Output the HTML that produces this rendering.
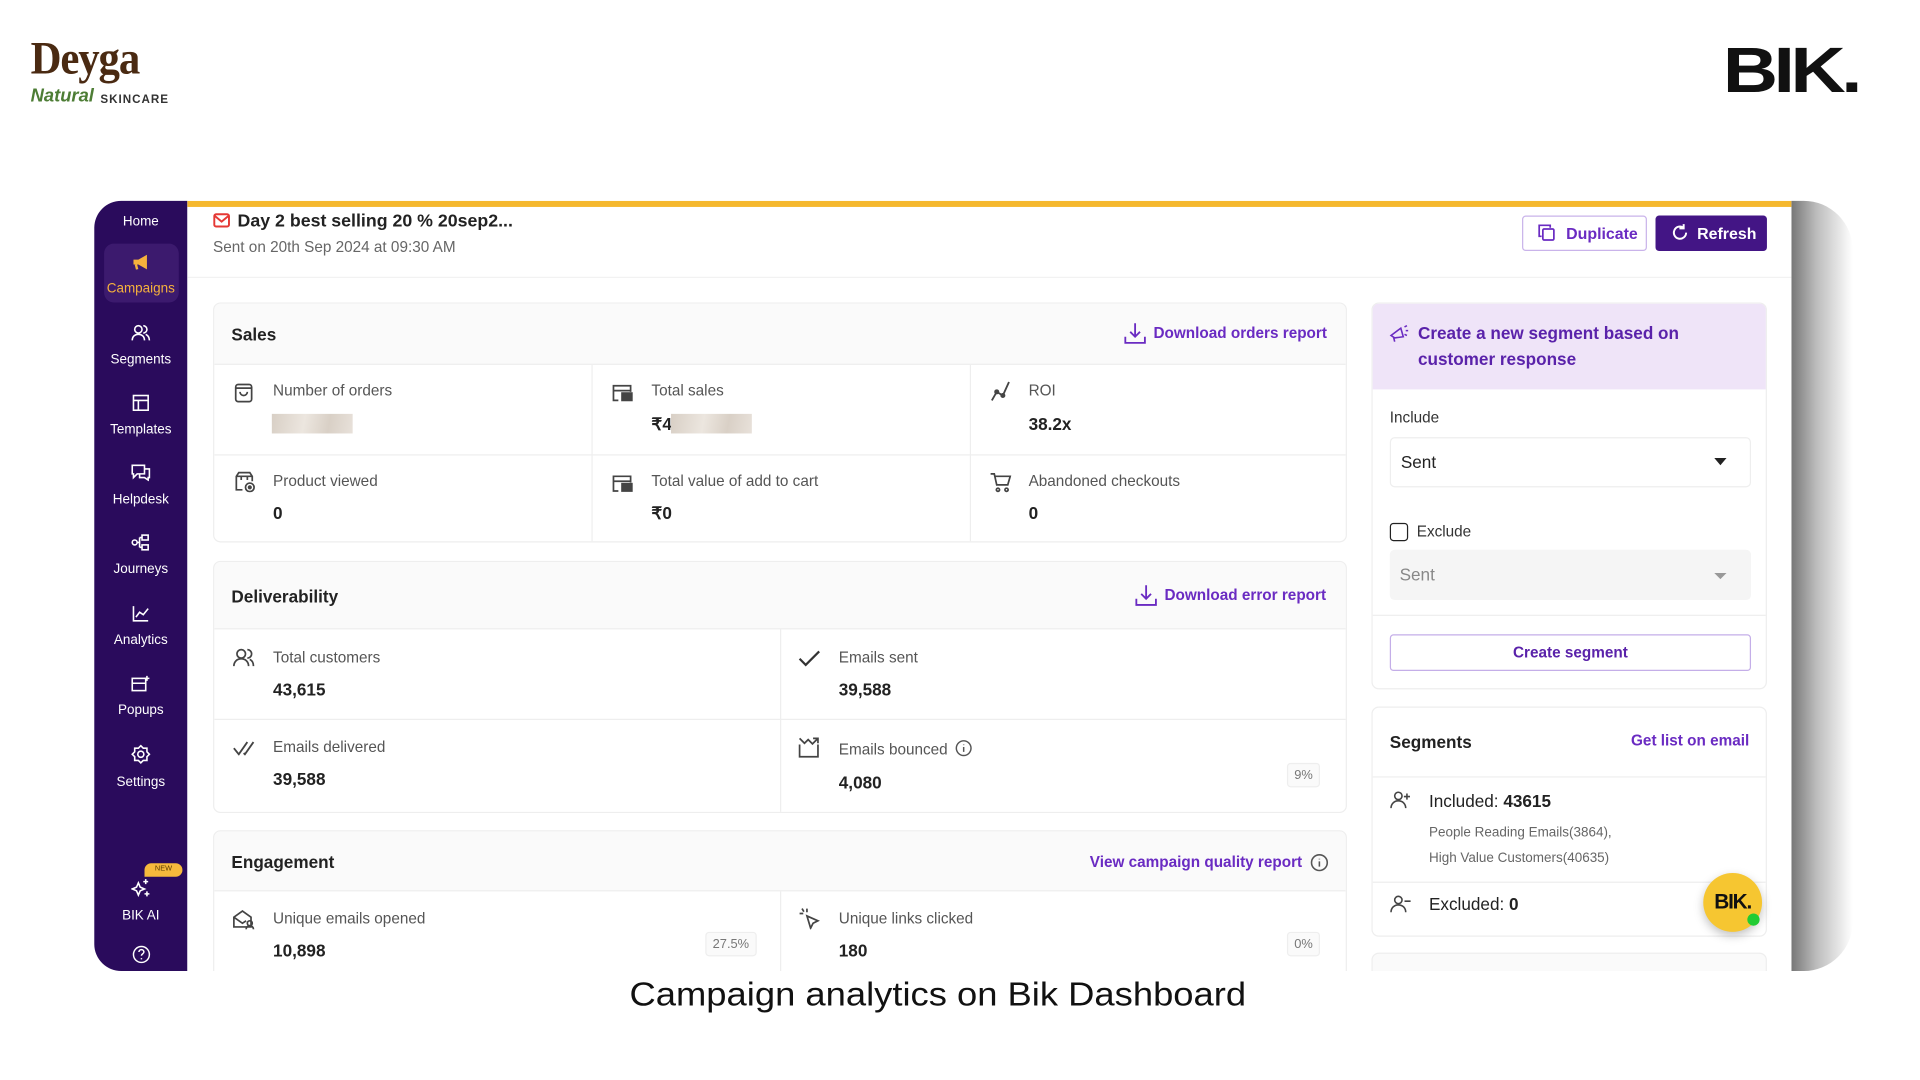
<!DOCTYPE html>
<html><head><meta charset="utf-8">
<style>
*{margin:0;padding:0;box-sizing:border-box}
html,body{width:1920px;height:1080px;overflow:hidden;background:#fff;font-family:"Liberation Sans",sans-serif}
#w{position:absolute;left:0;top:0;width:1568px;height:882px;transform:scale(1.22449);transform-origin:0 0}
.a{position:absolute}
.side{left:77px;top:164px;width:76px;height:629px;background:#2a0b5c;border-radius:22px 0 0 22px}
.si{position:absolute;left:0;width:76px;text-align:center;color:#fff;font-size:11px}
.si svg{display:block;margin:0 auto 9px}
.main{left:153px;top:164px;width:1310px;height:629px;background:#fff;overflow:hidden}
.card{position:absolute;border:1px solid #eee;border-radius:6px;background:#fff;overflow:hidden}
.ch{position:absolute;left:0;right:0;top:0;background:#fafafa;border-bottom:1px solid #eee}
.ct{position:absolute;left:14px;font-weight:bold;font-size:14px;color:#222}
.lk{position:absolute;color:#6a2bc2;font-weight:bold;font-size:12.5px}
.lbl{position:absolute;font-size:12.5px;color:#555}
.val{position:absolute;font-size:14px;font-weight:bold;color:#222}
.vl{position:absolute;width:1px;background:#eee}
.hl{position:absolute;height:1px;background:#eee}
.ic{position:absolute}
.pill{position:absolute;font-size:10.5px;color:#777;border:1px solid #eee;background:#fafafa;border-radius:3px;padding:3px 5px}
</style></head><body><div id="w">

<!-- logos -->
<div class="a" style="left:25px;top:26px;font-family:'Liberation Serif',serif;font-weight:bold;font-size:38px;color:#4a2a12;letter-spacing:-1px;transform:scaleX(0.92);transform-origin:0 0">Deyga</div>
<div class="a" style="left:25px;top:70px;font-size:15px;color:#4d7d35;font-style:italic;font-weight:bold">Natural</div>
<div class="a" style="left:82px;top:76px;font-size:9.5px;color:#333;font-weight:bold;letter-spacing:0.8px">SKINCARE</div>
<div class="a" style="left:1407px;top:28px;font-size:52px;font-weight:900;color:#111;letter-spacing:-3px;transform:scaleX(1.2);transform-origin:0 0"><b>BIK.</b></div>

<!-- shadow -->
<div class="a" style="left:1463px;top:164px;width:50px;height:629px;background:linear-gradient(90deg,#777,#bbb 40%,#fff);border-radius:0 40px 40px 0"></div>

<!-- sidebar -->
<div class="a side">
 <div class="si" style="top:11px">Home</div>
 <div class="a" style="left:8px;top:35px;width:61px;height:48px;background:#3c1a6e;border-radius:8px"></div>
 <div class="si" style="top:43px;color:#f6b13c"><svg width="16" height="14" viewBox="0 0 16 14"><path d="M2 5h4l7-4v12l-7-4H2z" fill="#f6b13c"/><path d="M4 9l1 4" stroke="#f6b13c" stroke-width="2"/></svg>Campaigns</div>
 <div class="si" style="top:101px"><svg width="16" height="14" viewBox="0 0 16 14" fill="none" stroke="#fff" stroke-width="1.3"><circle cx="6" cy="4" r="3"/><path d="M1 13c0-3 2-5 5-5s5 2 5 5"/><path d="M10 1a3 3 0 010 6M12 8c2 1 3 3 3 5"/></svg>Segments</div>
 <div class="si" style="top:158px"><svg width="14" height="14" viewBox="0 0 14 14" fill="none" stroke="#fff" stroke-width="1.3"><rect x="1" y="1" width="12" height="12"/><path d="M1 5h12M5 5v8"/></svg>Templates</div>
 <div class="si" style="top:215px"><svg width="16" height="14" viewBox="0 0 16 14" fill="none" stroke="#fff" stroke-width="1.3"><path d="M1 1h10v7H5l-3 3V8H1z"/><path d="M11 4h4v7h-1v2l-3-2H7V8"/></svg>Helpdesk</div>
 <div class="si" style="top:272px"><svg width="16" height="14" viewBox="0 0 16 14" fill="none" stroke="#fff" stroke-width="1.3"><circle cx="3" cy="7" r="2"/><rect x="9" y="1" width="5" height="4"/><rect x="9" y="9" width="5" height="4"/><path d="M5 7h2M7 3v8M7 3h2M7 11h2"/></svg>Journeys</div>
 <div class="si" style="top:330px"><svg width="14" height="14" viewBox="0 0 14 14" fill="none" stroke="#fff" stroke-width="1.3"><path d="M1 1v12h12M3 10l3-4 3 2 4-5"/></svg>Analytics</div>
 <div class="si" style="top:387px"><svg width="16" height="14" viewBox="0 0 16 14" fill="none" stroke="#fff" stroke-width="1.3"><rect x="1" y="3" width="11" height="10"/><path d="M1 7h11M13 1v4M11 3h4"/></svg>Popups</div>
 <div class="si" style="top:444px"><svg width="16" height="16" viewBox="0 0 16 16" fill="none" stroke="#fff" stroke-width="1.3"><circle cx="8" cy="8" r="2.5"/><path d="M8 1l2 2h3v3l2 2-2 2v3h-3l-2 2-2-2H3v-3L1 8l2-2V3h3z"/></svg>Settings</div>
 <div class="a" style="left:41px;top:541px;width:31px;height:11px;background:#f6b93c;border-radius:6px 6px 6px 0;font-size:6px;color:#5a3a00;text-align:center;line-height:11px">NEW</div>
 <div class="si" style="top:553px"><svg width="16" height="16" viewBox="0 0 16 16" fill="none" stroke="#fff" stroke-width="1.3"><path d="M6 4l1.5 3.5L11 9l-3.5 1.5L6 14l-1.5-3.5L1 9l3.5-1.5z"/><path d="M12 1v4M10 3h4M13 11v4M11 13h4"/></svg>BIK AI</div>
 <div class="si" style="top:608px"><svg width="15" height="15" viewBox="0 0 15 15" fill="none" stroke="#fff" stroke-width="1.2"><circle cx="7.5" cy="7.5" r="6.5"/><path d="M5.5 5.5a2 2 0 114 0c0 1.5-2 1.5-2 3M7.5 10.5v1"/></svg></div>
</div>

<!-- main -->
<div class="a main">
 <div class="a" style="left:0;top:0;width:1310px;height:5px;background:#f5b82e"></div>
 <svg class="ic" style="left:21px;top:10px" width="14" height="12" viewBox="0 0 14 12" fill="none" stroke="#e53935" stroke-width="1.6"><rect x="1" y="1" width="12" height="10" rx="1.5"/><path d="M1 2l6 5 6-5"/></svg>
 <div class="a" style="left:41px;top:9px;font-size:14.5px;font-weight:bold;color:#222">Day 2 best selling 20 % 20sep2...</div>
 <div class="a" style="left:21px;top:31px;font-size:12.5px;color:#666">Sent on 20th Sep 2024 at 09:30 AM</div>
 <div class="hl" style="left:0;top:62px;width:1310px;background:#f2f2f2"></div>
 <div class="a" style="left:1090px;top:12px;width:102px;height:29px;border:1px solid #c9b3ea;border-radius:3px;color:#6a2bc2;font-size:13px;font-weight:bold;line-height:27px;padding-left:35px">Duplicate</div>
 <svg class="ic" style="left:1102px;top:18px" width="16" height="16" viewBox="0 0 16 16" fill="none" stroke="#6a2bc2" stroke-width="1.4"><path d="M4 11H2V2h9v2"/><rect x="5" y="5" width="9" height="9" rx="1"/></svg>
 <div class="a" style="left:1199px;top:12px;width:91px;height:29px;background:#431585;border-radius:3px;color:#fff;font-size:13px;font-weight:bold;line-height:29px;padding-left:34px">Refresh</div>
 <svg class="ic" style="left:1211px;top:18px" width="16" height="16" viewBox="0 0 16 16" fill="none" stroke="#fff" stroke-width="1.6"><path d="M13 8a5 5 0 11-2-4"/><path d="M11 1v3.5h-3.5" /></svg>

 <!-- Sales -->
 <div class="card" style="left:21px;top:83px;width:926px;height:196px">
  <div class="ch" style="height:50px"></div>
  <div class="ct" style="top:17px">Sales</div>
  <svg class="ic" style="left:743px;top:15px" width="18" height="18" viewBox="0 0 18 18" fill="none" stroke="#6a2bc2" stroke-width="1.5"><path d="M9 1v11M5 8l4 4 4-4M1 12v5h16v-5"/></svg>
  <div class="lk" style="left:767px;top:17px">Download orders report</div>
  <div class="vl" style="left:308px;top:50px;height:146px"></div>
  <div class="vl" style="left:617px;top:50px;height:146px"></div>
  <div class="hl" style="left:0;top:123px;width:926px"></div>
  <svg class="ic" style="left:16px;top:64px" width="16" height="17" viewBox="0 0 16 17" fill="none" stroke="#444" stroke-width="1.4"><rect x="1.5" y="2" width="13" height="14" rx="2"/><path d="M1.5 5h13M5 8a3 3 0 006 0"/></svg>
  <div class="lbl" style="left:48px;top:64px">Number of orders</div>
  <div class="a" style="left:47px;top:90px;width:66px;height:16px;background:linear-gradient(100deg,#d8cfc5,#ece6df 40%,#d9d0c6 70%,#e8e1da)"></div>
  <svg class="ic" style="left:324px;top:65px" width="18" height="15" viewBox="0 0 18 15" fill="none" stroke="#444" stroke-width="1.4"><path d="M6 14H2V2h14v5"/><path d="M2 6h14"/><rect x="9" y="8" width="8" height="6" fill="#444"/></svg>
  <div class="lbl" style="left:357px;top:64px">Total sales</div>
  <div class="val" style="left:357px;top:90px">₹4</div>
  <div class="a" style="left:373px;top:90px;width:66px;height:16px;background:linear-gradient(100deg,#d8cfc5,#ece6df 40%,#d9d0c6 70%,#e8e1da)"></div>
  <svg class="ic" style="left:633px;top:62px" width="18" height="18" viewBox="0 0 18 18" fill="none" stroke="#444" stroke-width="1.5"><path d="M2 17l4-7 5 3 5-11"/><circle cx="6" cy="10" r="1.3" fill="#444"/><circle cx="11" cy="13" r="1.3" fill="#444"/></svg>
  <div class="lbl" style="left:665px;top:64px">ROI</div>
  <div class="val" style="left:665px;top:90px">38.2x</div>
  <svg class="ic" style="left:16px;top:136px" width="18" height="18" viewBox="0 0 18 18" fill="none" stroke="#444" stroke-width="1.4"><path d="M7 16H2V5l2-3h9l2 3v4M2 5h13M6 5v3M11 5v3"/><circle cx="13" cy="14" r="3.5"/><circle cx="13" cy="14" r="1" fill="#444"/></svg>
  <div class="lbl" style="left:48px;top:138px">Product viewed</div>
  <div class="val" style="left:48px;top:163px">0</div>
  <svg class="ic" style="left:324px;top:139px" width="18" height="15" viewBox="0 0 18 15" fill="none" stroke="#444" stroke-width="1.4"><path d="M6 14H2V2h14v5"/><path d="M2 6h14"/><rect x="9" y="8" width="8" height="6" fill="#444"/></svg>
  <div class="lbl" style="left:357px;top:138px">Total value of add to cart</div>
  <div class="val" style="left:357px;top:163px">₹0</div>
  <svg class="ic" style="left:633px;top:137px" width="18" height="18" viewBox="0 0 18 18" fill="none" stroke="#444" stroke-width="1.4"><path d="M1 2h3l2 9h9l2-7H5"/><circle cx="7" cy="15" r="1.3"/><circle cx="14" cy="15" r="1.3"/></svg>
  <div class="lbl" style="left:665px;top:138px">Abandoned checkouts</div>
  <div class="val" style="left:665px;top:163px">0</div>
 </div>

 <!-- Deliverability -->
 <div class="card" style="left:21px;top:294px;width:926px;height:206px">
  <div class="ch" style="height:55px"></div>
  <div class="ct" style="top:20px">Deliverability</div>
  <svg class="ic" style="left:752px;top:18px" width="18" height="18" viewBox="0 0 18 18" fill="none" stroke="#6a2bc2" stroke-width="1.5"><path d="M9 1v11M5 8l4 4 4-4M1 12v5h16v-5"/></svg>
  <div class="lk" style="left:776px;top:20px">Download error report</div>
  <div class="vl" style="left:462px;top:55px;height:151px"></div>
  <div class="hl" style="left:0;top:128px;width:926px"></div>
  <svg class="ic" style="left:15px;top:70px" width="18" height="16" viewBox="0 0 18 16" fill="none" stroke="#444" stroke-width="1.4"><circle cx="7" cy="5" r="3.5"/><path d="M1 15c0-3.5 2.5-6 6-6s6 2.5 6 6M12 1.5a3.5 3.5 0 010 7M14 9.5c2 1 3 3 3 5.5"/></svg>
  <div class="lbl" style="left:48px;top:71px">Total customers</div>
  <div class="val" style="left:48px;top:96px">43,615</div>
  <svg class="ic" style="left:477px;top:72px" width="18" height="14" viewBox="0 0 18 14" fill="none" stroke="#333" stroke-width="1.8"><path d="M1 7l5 5L17 1"/></svg>
  <div class="lbl" style="left:510px;top:71px">Emails sent</div>
  <div class="val" style="left:510px;top:96px">39,588</div>
  <svg class="ic" style="left:15px;top:146px" width="19" height="12" viewBox="0 0 19 12" fill="none" stroke="#444" stroke-width="1.5"><path d="M1 6l4 5L12 1M9 10l1 1 7-10"/></svg>
  <div class="lbl" style="left:48px;top:144px">Emails delivered</div>
  <div class="val" style="left:48px;top:169px">39,588</div>
  <svg class="ic" style="left:477px;top:143px" width="17" height="17" viewBox="0 0 17 17" fill="none" stroke="#444" stroke-width="1.4"><path d="M1 6v10h15V6M1 1l4 4 3-3 3 3M12 1h4v4M16 1l-5 5"/></svg>
  <div class="lbl" style="left:510px;top:146px">Emails bounced</div>
  <svg class="ic" style="left:605px;top:145px" width="14" height="14" viewBox="0 0 14 14" fill="none" stroke="#555" stroke-width="1.2"><circle cx="7" cy="7" r="6"/><path d="M7 6v4M7 4v.5"/></svg>
  <div class="val" style="left:510px;top:172px">4,080</div>
  <div class="pill" style="left:876px;top:164px">9%</div>
 </div>

 <!-- Engagement -->
 <div class="card" style="left:21px;top:514px;width:926px;height:140px">
  <div class="ch" style="height:49px"></div>
  <div class="ct" style="top:17px">Engagement</div>
  <div class="lk" style="left:715px;top:18px">View campaign quality report</div>
  <svg class="ic" style="left:895px;top:18px" width="15" height="15" viewBox="0 0 14 14" fill="none" stroke="#555" stroke-width="1.2"><circle cx="7" cy="7" r="6"/><path d="M7 6v4M7 4v.5"/></svg>
  <div class="vl" style="left:462px;top:49px;height:100px"></div>
  <svg class="ic" style="left:15px;top:64px" width="18" height="16" viewBox="0 0 18 16" fill="none" stroke="#444" stroke-width="1.4"><path d="M1 6l7-5 7 5v8H1z"/><path d="M1 6l7 5 3-2"/><circle cx="14" cy="11" r="2"/><path d="M11 16c0-2 1.5-3 3-3s3 1 3 3"/></svg>
  <div class="lbl" style="left:48px;top:64px">Unique emails opened</div>
  <div class="val" style="left:48px;top:89px">10,898</div>
  <div class="pill" style="left:401px;top:82px">27.5%</div>
  <svg class="ic" style="left:477px;top:62px" width="18" height="18" viewBox="0 0 18 18" fill="none" stroke="#444" stroke-width="1.4"><path d="M7 7l3 10 2-4 4-2z"/><path d="M3 1l1.5 2.5M1 5h3M7 1v3"/></svg>
  <div class="lbl" style="left:510px;top:64px">Unique links clicked</div>
  <div class="val" style="left:510px;top:89px">180</div>
  <div class="pill" style="left:876px;top:82px">0%</div>
 </div>

 <!-- right: create segment -->
 <div class="card" style="left:967px;top:83px;width:323px;height:316px">
  <div class="a" style="left:0;top:0;width:323px;height:70px;background:#efe4f8"></div>
  <svg class="ic" style="left:13px;top:17px" width="17" height="15" viewBox="0 0 17 15" fill="none" stroke="#6a2bc2" stroke-width="1.3"><path d="M2 9l8-6 2 7-7 1zM4 10l1 4"/><path d="M13 2l2-1M14 5h2M13 8l2 1"/></svg>
  <div class="a" style="left:37px;top:14px;font-size:14px;font-weight:bold;color:#5a22aa;line-height:21px">Create a new segment based on<br>customer response</div>
  <div class="a" style="left:14px;top:86px;font-size:12.5px;color:#333">Include</div>
  <div class="a" style="left:14px;top:109px;width:295px;height:41px;border:1px solid #eee;border-radius:4px;font-size:14px;color:#222;line-height:39px;padding-left:8px">Sent</div>
  <div class="a" style="left:279px;top:126px;width:0;height:0;border-left:5px solid transparent;border-right:5px solid transparent;border-top:6px solid #222"></div>
  <div class="a" style="left:14px;top:179px;width:15px;height:15px;border:1.5px solid #222;border-radius:3px"></div>
  <div class="a" style="left:36px;top:179px;font-size:12.5px;color:#333">Exclude</div>
  <div class="a" style="left:14px;top:201px;width:295px;height:41px;background:#f5f5f5;border-radius:4px;font-size:14px;color:#888;line-height:41px;padding-left:8px">Sent</div>
  <div class="a" style="left:279px;top:220px;width:0;height:0;border-left:5px solid transparent;border-right:5px solid transparent;border-top:5px solid #999"></div>
  <div class="hl" style="left:0;top:254px;width:323px"></div>
  <div class="a" style="left:14px;top:270px;width:295px;height:30px;border:1px solid #c4aee8;border-radius:3px;text-align:center;line-height:28px;font-size:12.5px;font-weight:bold;color:#5a22aa">Create segment</div>
 </div>

 <!-- segments -->
 <div class="card" style="left:967px;top:413px;width:323px;height:188px">
  <div class="a" style="left:14px;top:20px;font-size:14px;font-weight:bold;color:#222">Segments</div>
  <div class="lk" style="left:211px;top:20px">Get list on email</div>
  <div class="hl" style="left:0;top:56px;width:323px"></div>
  <svg class="ic" style="left:14px;top:67px" width="18" height="16" viewBox="0 0 18 16" fill="none" stroke="#444" stroke-width="1.3"><circle cx="7" cy="5" r="3"/><path d="M1 15c0-3.5 2.5-6 6-6s6 2.5 6 6M14 3v5M11.5 5.5h5"/></svg>
  <div class="a" style="left:46px;top:68px;font-size:14px;color:#222">Included: <b>43615</b></div>
  <div class="a" style="left:46px;top:92px;font-size:11px;color:#666;line-height:21px">People Reading Emails(3864),<br>High Value Customers(40635)</div>
  <div class="hl" style="left:0;top:142px;width:323px"></div>
  <svg class="ic" style="left:14px;top:152px" width="18" height="16" viewBox="0 0 18 16" fill="none" stroke="#444" stroke-width="1.3"><circle cx="7" cy="5" r="3"/><path d="M1 15c0-3.5 2.5-6 6-6s6 2.5 6 6M12 6h5"/></svg>
  <div class="a" style="left:46px;top:152px;font-size:14px;color:#222">Excluded: <b>0</b></div>
 </div>
 <div class="card" style="left:967px;top:614px;width:323px;height:40px;background:#fafafa"></div>
 <div class="a" style="left:1238px;top:549px;width:48px;height:48px;border-radius:50%;background:#f6c631;box-shadow:0 3px 8px rgba(0,0,0,.25);font-weight:900;font-size:17px;color:#111;text-align:center;line-height:48px;letter-spacing:-1px">BIK.</div>
 <div class="a" style="left:1274px;top:582px;width:10px;height:10px;border-radius:50%;background:#22cc33"></div>
</div>

<div class="a" style="left:0;top:797px;width:1532px;text-align:center;font-size:27px;color:#111"><span style="display:inline-block;transform:scaleX(1.1)">Campaign analytics on Bik Dashboard</span></div>
</div></body></html>
